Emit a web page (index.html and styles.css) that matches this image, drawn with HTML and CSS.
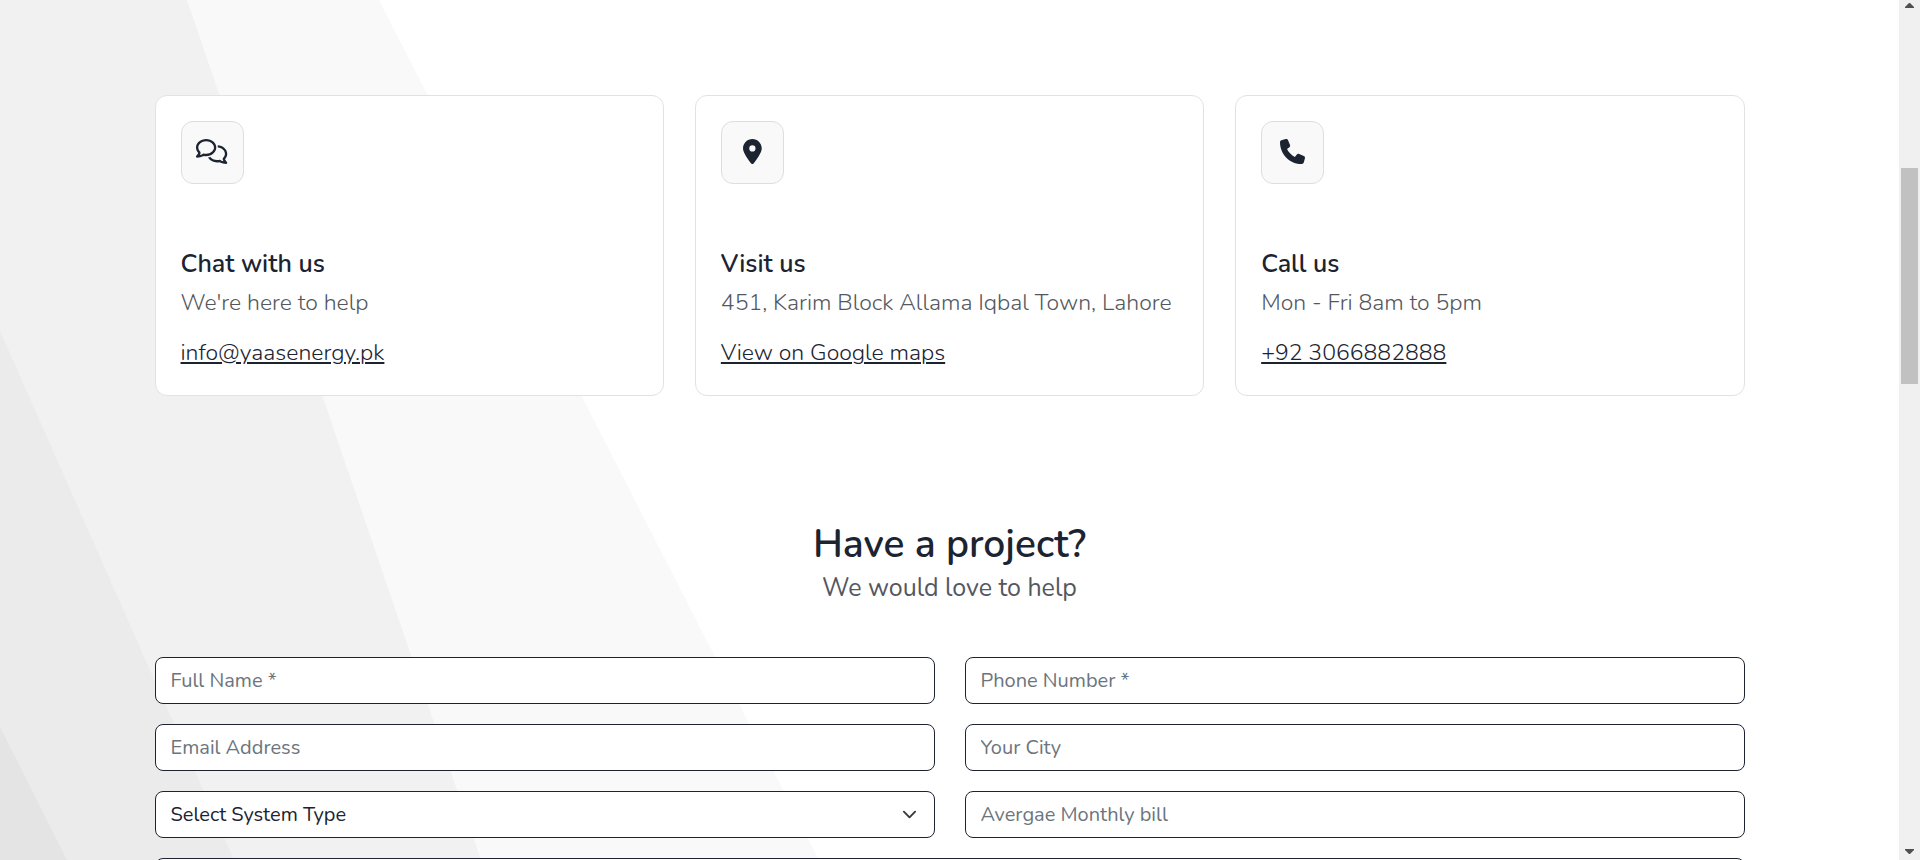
FILE: index.html
```html
<!DOCTYPE html>
<html lang="en">
<head>
<meta charset="utf-8">
<meta name="viewport" content="width=device-width, initial-scale=1">
<title>Contact us</title>
<link rel="stylesheet" href="styles.css">
</head>
<body>
<div class="viewport">
  <main class="page">
    <svg class="backdrop" viewBox="0 0 1899 860" preserveAspectRatio="xMinYMin slice" aria-hidden="true">
      <path fill="#f9f9f9" d="M0 0H379L819 860H0z"/>
      <path fill="#f1f1f1" d="M0 0H187L481 860H0z"/>
      <path fill="#ebebeb" d="M0 331L234 860H0z"/>
      <path fill="#e4e4e4" d="M0 727L67 860H0z"/>
    </svg>
    <div class="container">
      <section class="cards">
        <article class="card">
          <span class="card-icon">
            <svg viewBox="0 0 640 512" aria-hidden="true"><path d="M88.200 309.100c9.800-18.300 6.800-40.800-7.500-55.800C59.400 230.900 48 204 48 176c0-63.500 63.800-128 160-128s160 64.500 160 128s-63.800 128-160 128c-13.100 0-25.800-1.300-37.800-3.600c-10.400-2-21.200-.6-30.700 4.200c-4.100 2.100-8.300 4.100-12.600 6c-16 7.200-32.900 13.500-49.900 18c2.800-4.600 5.400-9.100 7.900-13.600c1.100-1.900 2.200-3.900 3.200-5.900zM0 176c0 41.800 17.200 80.100 45.900 110.300c-.9 1.700-1.900 3.500-2.800 5.100c-10.300 18.400-22.300 36.500-36.600 52.100c-6.600 7-8.300 17.200-4.600 25.900C5.800 378.300 14.400 384 24 384c43 0 86.500-13.300 122.700-29.700c4.800-2.200 9.600-4.500 14.200-6.800c15.100 3 30.900 4.500 47.100 4.500c114.900 0 208-78.800 208-176S322.900 0 208 0S0 78.800 0 176zM432 480c16.200 0 31.900-1.600 47.100-4.500c4.600 2.300 9.400 4.600 14.200 6.800C529.500 498.700 573 512 616 512c9.600 0 18.200-5.700 22-14.500c3.800-8.800 2-19-4.600-25.900c-14.200-15.600-26.200-33.700-36.600-52.100c-.9-1.700-1.900-3.400-2.800-5.100C622.800 384.100 640 345.800 640 304c0-94.400-87.900-171.500-198.200-175.800c4.100 15.200 6.200 31.200 6.200 47.800l0 .6c87.200 6.700 144 67.500 144 127.400c0 28-11.400 54.900-32.700 77.200c-14.300 15-17.300 37.600-7.500 55.800c1.100 2 2.200 4 3.200 5.900c2.500 4.500 5.200 9 7.900 13.600c-17-4.500-33.900-10.700-49.900-18c-4.300-1.900-8.500-3.900-12.600-6c-9.500-4.800-20.300-6.200-30.700-4.200c-12.100 2.400-24.800 3.600-37.800 3.600c-61.700 0-110-26.500-136.800-62.300c-16 5.400-32.800 9.400-50 11.800C279 439.800 350 480 432 480z"/></svg>
          </span>
          <h2 class="card-title">Chat with us</h2>
          <p class="card-text">We're here to help</p>
          <a class="card-link" href="mailto:info@yaasenergy.pk">info@yaasenergy.pk</a>
        </article>
        <article class="card">
          <span class="card-icon">
            <svg viewBox="0 0 384 512" aria-hidden="true"><path d="M215.700 499.200C267 435 384 279.400 384 192C384 86 298 0 192 0S0 86 0 192c0 87.400 117 243 168.300 307.200c12.300 15.300 35.100 15.300 47.400 0zM192 128a64 64 0 1 1 0 128 64 64 0 1 1 0-128z"/></svg>
          </span>
          <h2 class="card-title">Visit us</h2>
          <p class="card-text">451, Karim Block Allama Iqbal Town, Lahore</p>
          <a class="card-link" href="#map">View on Google maps</a>
        </article>
        <article class="card">
          <span class="card-icon">
            <svg viewBox="0 0 512 512" aria-hidden="true"><path d="M164.900 24.600c-7.700-18.600-28-28.500-47.400-23.200l-88 24C12.100 30.200 0 46 0 64C0 311.400 200.600 512 448 512c18 0 33.800-12.100 38.600-29.500l24-88c5.300-19.400-4.600-39.700-23.200-47.400l-96-40c-16.300-6.800-35.200-2.100-46.300 11.600L304.700 368C234.300 334.700 177.300 277.700 144 207.300L193.300 167c13.700-11.200 18.400-30 11.600-46.300l-40-96z"/></svg>
          </span>
          <h2 class="card-title">Call us</h2>
          <p class="card-text">Mon - Fri 8am to 5pm</p>
          <a class="card-link" href="tel:+923066882888">+92 3066882888</a>
        </article>
      </section>

      <section class="project">
        <header class="project-head">
          <h1 class="project-title">Have a project?</h1>
          <p class="project-sub">We would love to help</p>
        </header>
        <form class="form">
          <input class="field" type="text" aria-label="Full Name" placeholder="Full Name *">
          <input class="field" type="tel" aria-label="Phone Number" placeholder="Phone Number *">
          <input class="field" type="email" aria-label="Email Address" placeholder="Email Address">
          <input class="field" type="text" aria-label="Your City" placeholder="Your City">
          <div class="select-wrap">
            <select class="field select" aria-label="System Type">
              <option>Select System Type</option>
            </select>
            <svg class="chevron" viewBox="0 0 16 16" aria-hidden="true"><path d="m2 5 6 6 6-6"/></svg>
          </div>
          <input class="field" type="text" aria-label="Average Monthly bill" placeholder="Avergae Monthly bill">
          <textarea class="field message" aria-label="Message" rows="4"></textarea>
        </form>
      </section>
    </div>
  </main>
  <div class="scrollbar" aria-hidden="true">
    <svg class="scroll-arrow" viewBox="0 0 9 5"><path d="M4 0h1l4 4v1H0V4z"/></svg>
    <div class="scroll-track"><div class="scroll-thumb"></div></div>
    <svg class="scroll-arrow" viewBox="0 0 9 5"><path d="M0 0h9v1L5 5H4L0 1z"/></svg>
  </div>
</div>
</body>
</html>
```
FILE: styles.css
```css
:root {
  --ink: #1c2331;
  --muted: #54585e;
  --line: #e2e2e2;
}

* {
  box-sizing: border-box;
}

body {
  margin: 0;
  background: #fff;
  color: var(--ink);
  font-family: Nunito, "Open Sans", "Noto Sans", sans-serif;
  font-size: 20px;
  font-weight: 400;
  line-height: 34px;
}

.viewport {
  display: flex;
  height: 100vh;
  overflow: hidden;
}

.page {
  position: relative;
  flex: 1;
  min-width: 0;
  overflow: hidden;
}

.backdrop {
  position: absolute;
  top: 0;
  left: 0;
  width: 100%;
  height: 100%;
}

.container {
  position: relative;
  max-width: 1650px;
  margin: 0 auto;
  padding: 95px 30px 0;
}

.cards {
  display: grid;
  grid-template-columns: repeat(3, 1fr);
  gap: 31px;
}

.card {
  padding: 25px;
  border: 1px solid var(--line);
  border-radius: 12px;
  background: #fff;
}

.card-icon {
  display: flex;
  align-items: center;
  justify-content: center;
  width: 63px;
  height: 63px;
  margin-bottom: 65px;
  padding-bottom: 2px;
  border: 1px solid #dedede;
  border-radius: 12px;
  background: #f9f9f9;
}

.card-icon svg {
  height: 25px;
  fill: var(--ink);
}

.card-title {
  margin: 0 0 7px;
  font-size: 25px;
  font-weight: 600;
  line-height: 30px;
}

.card-text,
.card-link {
  font-size: 23px;
  font-weight: 300;
}

.card-text {
  margin: 0 0 16px;
  color: var(--muted);
}

.card-link {
  display: block;
  width: fit-content;
  color: var(--ink);
  text-decoration-thickness: 2px;
  text-underline-offset: 2px;
}

.project {
  padding-top: 124px;
}

.project-head {
  margin-bottom: 51px;
  text-align: center;
}

.project-title {
  margin: 0;
  font-size: 39px;
  font-weight: 600;
  line-height: 50px;
}

.project-sub {
  margin: 0;
  color: var(--muted);
  font-size: 25px;
  line-height: 36px;
}

.form {
  display: grid;
  grid-template-columns: 1fr 1fr;
  gap: 20px 30px;
}

.field {
  display: block;
  width: 100%;
  height: 47px;
  padding: 0 15px;
  border: 1px solid var(--ink);
  border-radius: 8px;
  background: #fff;
  color: var(--ink);
  font: inherit;
}

.field::placeholder {
  color: #6c757d;
  opacity: 1;
}

.select-wrap {
  position: relative;
}

.select {
  appearance: none;
}

.chevron {
  position: absolute;
  top: 16px;
  right: 18px;
  width: 15px;
  height: 15px;
  fill: none;
  stroke: #343a40;
  stroke-width: 2;
  stroke-linecap: round;
  stroke-linejoin: round;
  pointer-events: none;
}

.message {
  grid-column: 1 / -1;
  height: 140px;
  resize: none;
}

.scrollbar {
  display: flex;
  flex-direction: column;
  align-items: center;
  width: 21px;
  padding: 3px 0 6px;
  background: #f0f0f0;
}

.scroll-arrow {
  width: 9px;
  height: 5px;
  fill: #505050;
}

.scroll-track {
  flex: 1;
  width: 17px;
  padding-top: 160px;
}

.scroll-thumb {
  height: 216px;
  background: #c1c1c1;
}
```
